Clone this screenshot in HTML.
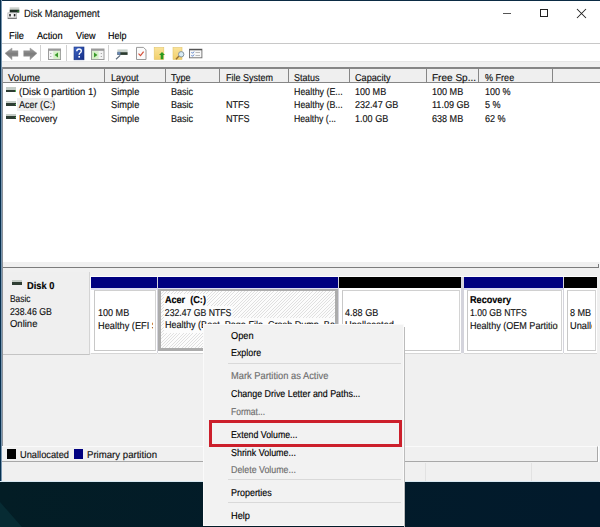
<!DOCTYPE html>
<html><head><meta charset="utf-8"><style>
html,body{margin:0;padding:0;width:600px;height:527px;overflow:hidden;}
body{position:relative;font-family:"Liberation Sans",sans-serif;}
div,span,svg{position:absolute;}
span{white-space:nowrap;line-height:1;text-rendering:geometricPrecision;transform-origin:0 0;-webkit-text-stroke:0.15px currentColor;}
</style></head><body>
<div style="left:0px;top:0px;width:600px;height:527px;background:linear-gradient(90deg,#031d25,#021b2a 60%,#021a2c)"></div>
<svg style="left:0;top:482px" width="600" height="45"><polygon points="0,20 22,45 0,45" fill="#072b33"/></svg>
<div style="left:0px;top:0px;width:600px;height:482px;background:#fff"></div>
<div style="left:0px;top:0px;width:600px;height:1px;background:#0b2b44"></div>
<div style="left:0px;top:0px;width:1px;height:482px;background:#07304f"></div>
<div style="left:1px;top:0px;width:1px;height:482px;background:#7896b0"></div>
<div style="left:0px;top:481px;width:600px;height:1px;background:#d8e8f2"></div>
<svg style="left:6px;top:6px" width="16" height="14" viewBox="0 0 16 14">
<rect x="3.7" y="1.3" width="9.6" height="2.5" fill="#cdd2cd"/>
<rect x="3.7" y="3.7" width="9.6" height="2.9" fill="#1f2f25"/>
<rect x="11.6" y="4.6" width="1.2" height="1.2" fill="#4a4"/>
<rect x="1.9" y="6.9" width="8.7" height="5.8" fill="#f6f6f6" stroke="#a8a8a8" stroke-width="0.7"/>
<rect x="3.2" y="8" width="1.6" height="2.4" fill="#222"/>
<rect x="7.8" y="8" width="1.6" height="2.4" fill="#222"/>
<rect x="1.9" y="11.7" width="8.7" height="1.1" fill="#666"/>
</svg>
<span style="left:24px;top:9.25px;font-size:10.5px;color:#111;transform:scaleX(0.8946);">Disk Management</span>
<div style="left:503px;top:13px;width:8px;height:1px;background:#555"></div>
<div style="left:540px;top:9px;width:8px;height:8px;border:1px solid #222;box-sizing:border-box"></div>
<svg style="left:576px;top:8px" width="11" height="11" viewBox="0 0 11 11"><path d="M1 1L10 10M10 1L1 10" stroke="#222" stroke-width="1.05"/></svg>
<span style="left:9px;top:31.60px;font-size:10px;color:#000;transform:scaleX(0.9309);">File</span>
<span style="left:37px;top:31.60px;font-size:10px;color:#000;transform:scaleX(0.9175);">Action</span>
<span style="left:76px;top:31.60px;font-size:10px;color:#000;transform:scaleX(0.9072);">View</span>
<span style="left:108px;top:31.60px;font-size:10px;color:#000;transform:scaleX(0.8995);">Help</span>
<div style="left:2px;top:43px;width:598px;height:1px;background:#c8c8c8"></div>
<div style="left:2px;top:61px;width:598px;height:6px;background:#f0f0f0"></div>
<div style="left:2px;top:61px;width:598px;height:1px;background:#e6e6e6"></div>
<div style="left:40px;top:45px;width:1px;height:16px;background:#d0d0d0"></div>
<div style="left:65.5px;top:45px;width:1px;height:16px;background:#d0d0d0"></div>
<div style="left:108px;top:45px;width:1px;height:16px;background:#d0d0d0"></div>
<svg style="left:4px;top:47px" width="36" height="14" viewBox="0 0 36 14">
<defs><linearGradient id="ag" x1="0" y1="0" x2="0" y2="1"><stop offset="0" stop-color="#a4a4a4"/><stop offset="0.5" stop-color="#7c7c7c"/><stop offset="1" stop-color="#969696"/></linearGradient></defs>
<path d="M1 6.3L8 1V3.7H14V9.3H8V12.7Z" fill="url(#ag)" stroke="#9a9a9a" stroke-width="0.5"/>
<path d="M33 6.3L26 1V3.7H19.7V9.3H26V12.7Z" fill="url(#ag)" stroke="#9a9a9a" stroke-width="0.5"/>
</svg>
<svg style="left:47px;top:46px" width="60" height="15" viewBox="0 0 60 15">
<rect x="1.5" y="3" width="12" height="10.5" fill="#f4f4f4" stroke="#9c9c9c" stroke-width="1"/>
<rect x="1.5" y="3" width="12" height="1.8" fill="#9a9a9a"/>
<rect x="6.3" y="5.2" width="6.8" height="7.9" fill="#d6efc8"/>
<path d="M7.6 9.1L11 6.6V11.6Z" fill="#3a9a2a"/>
<rect x="3.3" y="7" width="1" height="1" fill="#999"/><rect x="3.3" y="10" width="1" height="1" fill="#999"/>
<defs><linearGradient id="hg" x1="0" y1="0" x2="1" y2="1"><stop offset="0" stop-color="#3f68c8"/><stop offset="1" stop-color="#142c84"/></linearGradient></defs>
<rect x="27" y="1" width="10" height="12.8" fill="url(#hg)" stroke="#1c3580" stroke-width="0.6"/>
<path d="M29.8 5.2Q29.8 3 32 3Q34.3 3 34.3 5.1Q34.3 6.3 33 7Q32.2 7.5 32.2 8.8" fill="none" stroke="#fff" stroke-width="1.4"/>
<rect x="31.4" y="10" width="1.6" height="1.6" fill="#fff"/>
<rect x="44.5" y="3" width="12.5" height="10.5" fill="#f4f4f4" stroke="#9c9c9c" stroke-width="1"/>
<rect x="44.5" y="3" width="12.5" height="1.8" fill="#9a9a9a"/>
<rect x="45" y="5.2" width="6.6" height="7.9" fill="#d6efc8"/>
<path d="M47 6.6L50.4 9.1L47 11.6Z" fill="#3a9a2a"/>
<rect x="53.8" y="7" width="1" height="1" fill="#999"/><rect x="53.8" y="10" width="1" height="1" fill="#999"/>
</svg>
<svg style="left:114px;top:46px" width="92" height="15" viewBox="0 0 92 15">
<rect x="3.4" y="3.4" width="10.2" height="2.8" fill="#c9d2cc"/>
<rect x="3.4" y="6.2" width="10.2" height="2.7" fill="#2b3b2f"/>
<rect x="3.4" y="5.8" width="3" height="3" fill="#6a86b0"/>
<path d="M2 13.2L6.2 9.4" stroke="#5c6a7a" stroke-width="1.2"/>
<path d="M22.5 1.4H29.5L32 3.9V13.5H22.5Z" fill="#fbfbfb" stroke="#8e8e8e" stroke-width="0.9"/>
<path d="M24.5 7.6L26.5 9.6L29.6 5.6" fill="none" stroke="#d4503a" stroke-width="1.2"/>
<defs><linearGradient id="yg" x1="0" y1="0" x2="0" y2="1"><stop offset="0" stop-color="#fae39a"/><stop offset="1" stop-color="#f2cf6a"/></linearGradient></defs>
<rect x="40.2" y="1.5" width="9.6" height="12" fill="url(#yg)" stroke="#e2c56a" stroke-width="0.6"/>
<path d="M48 6L51 9H49.3V13.2H46.7V9H45Z" fill="#2a9a20"/>
<rect x="59" y="1.5" width="9" height="12" fill="url(#yg)" stroke="#e2c56a" stroke-width="0.6"/>
<path d="M62 13.2L65 10" stroke="#9a7030" stroke-width="1.3"/>
<circle cx="67.2" cy="8.3" r="2.7" fill="#d8ecf6" stroke="#7a8a95" stroke-width="0.9"/>
<rect x="75.5" y="3.2" width="12.4" height="8.6" fill="#f8f8f8" stroke="#6c6c6c" stroke-width="0.9"/>
<rect x="75.5" y="3" width="12.4" height="1.3" fill="#555"/>
<path d="M77.5 6.3L78.5 7.3L80 5.6M77.5 9.3L78.5 10.3L80 8.6" fill="none" stroke="#3a6ac0" stroke-width="0.9"/>
<path d="M81.5 6.5H86M81.5 9.5H86" stroke="#aaa" stroke-width="0.8"/>
</svg>
<div style="left:2px;top:67px;width:598px;height:195px;background:#fff"></div>
<div style="left:2px;top:67px;width:598px;height:1.5px;background:#868686"></div>
<div style="left:2px;top:68.5px;width:598px;height:14px;background:#efefef"></div>
<div style="left:2px;top:82.3px;width:598px;height:1.2px;background:#868686"></div>
<div style="left:104px;top:68px;width:1.2px;height:14.5px;background:#868686"></div>
<div style="left:165px;top:68px;width:1.2px;height:14.5px;background:#868686"></div>
<div style="left:219px;top:68px;width:1.2px;height:14.5px;background:#868686"></div>
<div style="left:288px;top:68px;width:1.2px;height:14.5px;background:#868686"></div>
<div style="left:349px;top:68px;width:1.2px;height:14.5px;background:#868686"></div>
<div style="left:426px;top:68px;width:1.2px;height:14.5px;background:#868686"></div>
<div style="left:478px;top:68px;width:1.2px;height:14.5px;background:#868686"></div>
<div style="left:552px;top:68px;width:1.2px;height:14.5px;background:#868686"></div>
<span style="left:7.6px;top:74.00px;font-size:10px;color:#111;transform:scaleX(0.9594);">Volume</span>
<span style="left:110.7px;top:74.00px;font-size:10px;color:#111;transform:scaleX(0.9192);">Layout</span>
<span style="left:171px;top:74.00px;font-size:10px;color:#111;transform:scaleX(0.9050);">Type</span>
<span style="left:225.7px;top:74.00px;font-size:10px;color:#111;transform:scaleX(0.8998);">File System</span>
<span style="left:294px;top:74.00px;font-size:10px;color:#111;transform:scaleX(0.8960);">Status</span>
<span style="left:355.4px;top:74.00px;font-size:10px;color:#111;transform:scaleX(0.9150);">Capacity</span>
<span style="left:432px;top:74.00px;font-size:10px;color:#111;transform:scaleX(1.0021);">Free Sp...</span>
<span style="left:484.5px;top:74.00px;font-size:10px;color:#111;transform:scaleX(0.9050);">% Free</span>
<div style="left:17px;top:98px;width:38px;height:13px;background:#ededed"></div>
<span style="left:18.5px;top:87.90px;font-size:10px;color:#111;transform:scaleX(0.9552);">(Disk 0 partition 1)</span>
<span style="left:110.7px;top:87.90px;font-size:10px;color:#111;transform:scaleX(0.9258);">Simple</span>
<span style="left:171px;top:87.90px;font-size:10px;color:#111;transform:scaleX(0.9050);">Basic</span>
<span style="left:294px;top:87.90px;font-size:10px;color:#111;transform:scaleX(0.8851);">Healthy (E...</span>
<span style="left:355.4px;top:87.90px;font-size:10px;color:#111;transform:scaleX(0.9050);">100 MB</span>
<span style="left:432px;top:87.90px;font-size:10px;color:#111;transform:scaleX(0.9050);">100 MB</span>
<span style="left:484.5px;top:87.90px;font-size:10px;color:#111;transform:scaleX(0.9050);">100 %</span>
<div style="left:6px;top:87.2px;width:10px;height:2.5px;background:#c4ccc6"></div>
<div style="left:6px;top:89.7px;width:10px;height:2.6px;background:#2e3d33"></div>
<div style="left:14.5px;top:90.2px;width:1.2px;height:1.4px;background:#5a5"></div>
<span style="left:18.5px;top:101.30px;font-size:10px;color:#111;transform:scaleX(0.9050);">Acer (C:)</span>
<span style="left:110.7px;top:101.30px;font-size:10px;color:#111;transform:scaleX(0.9258);">Simple</span>
<span style="left:171px;top:101.30px;font-size:10px;color:#111;transform:scaleX(0.9050);">Basic</span>
<span style="left:225.7px;top:101.30px;font-size:10px;color:#111;transform:scaleX(0.9050);">NTFS</span>
<span style="left:294px;top:101.30px;font-size:10px;color:#111;transform:scaleX(0.8851);">Healthy (B...</span>
<span style="left:355.4px;top:101.30px;font-size:10px;color:#111;transform:scaleX(0.9050);">232.47 GB</span>
<span style="left:432px;top:101.30px;font-size:10px;color:#111;transform:scaleX(0.9050);">11.09 GB</span>
<span style="left:484.5px;top:101.30px;font-size:10px;color:#111;transform:scaleX(0.9050);">5 %</span>
<div style="left:6px;top:100.6px;width:10px;height:2.5px;background:#c4ccc6"></div>
<div style="left:6px;top:103.1px;width:10px;height:2.6px;background:#2e3d33"></div>
<div style="left:14.5px;top:103.6px;width:1.2px;height:1.4px;background:#5a5"></div>
<span style="left:18.5px;top:114.60px;font-size:10px;color:#111;transform:scaleX(0.9050);">Recovery</span>
<span style="left:110.7px;top:114.60px;font-size:10px;color:#111;transform:scaleX(0.9258);">Simple</span>
<span style="left:171px;top:114.60px;font-size:10px;color:#111;transform:scaleX(0.9050);">Basic</span>
<span style="left:225.7px;top:114.60px;font-size:10px;color:#111;transform:scaleX(0.9050);">NTFS</span>
<span style="left:294px;top:114.60px;font-size:10px;color:#111;transform:scaleX(0.8687);">Healthy (...</span>
<span style="left:355.4px;top:114.60px;font-size:10px;color:#111;transform:scaleX(0.9050);">1.00 GB</span>
<span style="left:432px;top:114.60px;font-size:10px;color:#111;transform:scaleX(0.9050);">638 MB</span>
<span style="left:484.5px;top:114.60px;font-size:10px;color:#111;transform:scaleX(0.9050);">62 %</span>
<div style="left:6px;top:113.89999999999999px;width:10px;height:2.5px;background:#c4ccc6"></div>
<div style="left:6px;top:116.39999999999999px;width:10px;height:2.6px;background:#2e3d33"></div>
<div style="left:14.5px;top:116.89999999999999px;width:1.2px;height:1.4px;background:#5a5"></div>
<div style="left:2px;top:262px;width:598px;height:5px;background:#f0f0f0"></div>
<div style="left:2px;top:267px;width:597px;height:1px;background:#7c7c7c"></div>
<div style="left:598px;top:263.5px;width:1px;height:4.5px;background:#7c7c7c"></div>
<div style="left:599px;top:262px;width:1px;height:220px;background:#f4f6f8"></div>
<div style="left:2px;top:268px;width:598px;height:178px;background:#f0f0f0"></div>
<div style="left:2px;top:67px;width:1px;height:394px;background:#8c9198"></div>
<div style="left:3px;top:272px;width:87px;height:83px;background:#efefef;border-right:1px solid #d4d4d4;border-bottom:1px solid #c4c4c4;box-sizing:border-box"></div>
<div style="left:12px;top:280px;width:10px;height:2.2px;background:#c4ccc6"></div>
<div style="left:12px;top:282.2px;width:10px;height:2.6px;background:#2e3d33"></div>
<span style="left:27px;top:282.00px;font-size:10px;color:#000;transform:scaleX(0.9266);font-weight:bold;">Disk 0</span>
<span style="left:10px;top:294.80px;font-size:10px;color:#111;transform:scaleX(0.8383);">Basic</span>
<span style="left:10px;top:307.80px;font-size:10px;color:#111;transform:scaleX(0.8742);">238.46 GB</span>
<span style="left:10px;top:320.00px;font-size:10px;color:#111;transform:scaleX(0.9479);">Online</span>
<div style="left:90px;top:275.8px;width:507px;height:1.2px;background:#fdfdfd"></div>
<div style="left:156px;top:277px;width:441px;height:76px;background:#d4d4dc"></div>
<div style="left:89.5px;top:276px;width:1.5px;height:77px;background:#fbfbfd"></div>
<div style="left:90.5px;top:277px;width:66.5px;height:11px;background:#000080"></div>
<div style="left:90.5px;top:288px;width:66.5px;height:65px;background:#fff"></div>
<div style="left:90.5px;top:353px;width:66.5px;height:1px;background:#d6d6d6"></div>
<div style="left:90.5px;top:288px;width:66.5px;height:1.5px;background:#dcdcf0"></div>
<div style="left:93.5px;top:290px;width:62.5px;height:60.5px;background:#fff;border-left:1px solid #c8c8c8;border-top:1px solid #d0d0d0;border-right:1px solid #d4d4d4;border-bottom:1px solid #c8c8c8;box-sizing:border-box"></div>
<div style="left:94.5px;top:291px;width:58.5px;height:57px;overflow:hidden">
<span style="left:3.0px;top:18.00px;font-size:10px;color:#111;transform:scaleX(0.9053);">100 MB</span>
<span style="left:3.0px;top:30.90px;font-size:10px;color:#111;transform:scaleX(0.9220);">Healthy (EFI System Partition)</span>
</div>
<div style="left:158px;top:277px;width:180px;height:11px;background:#000080"></div>
<div style="left:158px;top:288px;width:180px;height:65px;background:#fff"></div>
<div style="left:158px;top:353px;width:180px;height:1px;background:#d6d6d6"></div>
<div style="left:158px;top:288px;width:180px;height:1.5px;background:#dcdcf0"></div>
<div style="left:158px;top:289px;width:180px;height:62px;background:#acacac"></div>
<div style="left:161px;top:291px;width:174px;height:57px;background:repeating-linear-gradient(135deg,#fcfcfc 0 1.6px,#e0e0e0 1.6px 2.3px)"></div>
<div style="left:161px;top:291px;width:174px;height:57px;overflow:hidden">
<span style="left:3.5px;top:5.30px;font-size:10px;color:#000;transform:scaleX(0.9110);font-weight:bold;background:#fcfcfc;padding:2.6px 1px 1.8px 1px;margin:-2.6px 0 0 -1px;">Acer&nbsp; (C:)</span>
<span style="left:3.5px;top:17.70px;font-size:10px;color:#111;transform:scaleX(0.8670);background:#fcfcfc;padding:2.6px 1px 1.8px 1px;margin:-2.6px 0 0 -1px;">232.47 GB NTFS</span>
<span style="left:3.5px;top:30.00px;font-size:10px;color:#111;transform:scaleX(0.9050);background:#fcfcfc;padding:2.6px 1px 1.8px 1px;margin:-2.6px 0 0 -1px;">Healthy (Boot, Page File, Crash Dump, Basic Data Partition)</span>
</div>
<div style="left:339px;top:277px;width:122px;height:11px;background:#000"></div>
<div style="left:339px;top:288px;width:122px;height:65px;background:#fff"></div>
<div style="left:339px;top:353px;width:122px;height:1px;background:#d6d6d6"></div>
<div style="left:339px;top:288px;width:122px;height:1.5px;#e8e8e8"></div>
<div style="left:342px;top:290px;width:118px;height:60.5px;background:#fff;border-left:1px solid #c8c8c8;border-top:1px solid #d0d0d0;border-right:1px solid #d4d4d4;border-bottom:1px solid #c8c8c8;box-sizing:border-box"></div>
<div style="left:343px;top:291px;width:113px;height:57px;overflow:hidden">
<span style="left:2px;top:17.50px;font-size:10px;color:#111;transform:scaleX(0.9050);">4.88 GB</span>
<span style="left:2px;top:30.00px;font-size:10px;color:#111;transform:scaleX(0.9278);">Unallocated</span>
</div>
<div style="left:464px;top:277px;width:99px;height:11px;background:#000080"></div>
<div style="left:464px;top:288px;width:99px;height:65px;background:#fff"></div>
<div style="left:464px;top:353px;width:99px;height:1px;background:#d6d6d6"></div>
<div style="left:464px;top:288px;width:99px;height:1.5px;background:#dcdcf0"></div>
<div style="left:467px;top:290px;width:95px;height:60.5px;background:#fff;border-left:1px solid #c8c8c8;border-top:1px solid #d0d0d0;border-right:1px solid #d4d4d4;border-bottom:1px solid #c8c8c8;box-sizing:border-box"></div>
<div style="left:468px;top:291px;width:90px;height:57px;overflow:hidden">
<span style="left:2px;top:4.60px;font-size:10px;color:#000;transform:scaleX(0.9105);font-weight:bold;">Recovery</span>
<span style="left:2px;top:17.90px;font-size:10px;color:#111;transform:scaleX(0.8662);">1.00 GB NTFS</span>
<span style="left:2px;top:31.00px;font-size:10px;color:#111;transform:scaleX(0.9050);">Healthy (OEM Partition)</span>
</div>
<div style="left:564px;top:277px;width:32.5px;height:11px;background:#000"></div>
<div style="left:564px;top:288px;width:32.5px;height:65px;background:#fff"></div>
<div style="left:564px;top:353px;width:32.5px;height:1px;background:#d6d6d6"></div>
<div style="left:564px;top:288px;width:32.5px;height:1.5px;#e8e8e8"></div>
<div style="left:567px;top:290px;width:28.5px;height:60.5px;background:#fff;border-left:1px solid #c8c8c8;border-top:1px solid #d0d0d0;border-right:1px solid #d4d4d4;border-bottom:1px solid #c8c8c8;box-sizing:border-box"></div>
<div style="left:568px;top:291px;width:23.5px;height:57px;overflow:hidden">
<span style="left:2px;top:17.90px;font-size:10px;color:#111;transform:scaleX(0.9050);">8 MB</span>
<span style="left:2px;top:31.00px;font-size:10px;color:#111;transform:scaleX(0.9278);">Unallocated</span>
</div>
<div style="left:2px;top:446px;width:596px;height:16px;background:#f0f0f0;border-top:1px solid #fafafa;border-bottom:1px solid #a8a8a8;border-right:1px solid #a8a8a8;box-sizing:border-box"></div>
<div style="left:7px;top:449px;width:8.5px;height:9.5px;background:#000"></div>
<span style="left:19.5px;top:451.00px;font-size:10px;color:#111;transform:scaleX(0.9278);">Unallocated</span>
<div style="left:74px;top:449px;width:8.5px;height:9.5px;background:#000080"></div>
<span style="left:86.8px;top:451.00px;font-size:10px;color:#111;transform:scaleX(0.9616);">Primary partition</span>
<div style="left:2px;top:462px;width:598px;height:19px;background:#f0f0f0"></div>
<div style="left:425px;top:463px;width:1px;height:18px;background:#e2e2e2"></div>
<div style="left:531px;top:463px;width:1px;height:18px;background:#e2e2e2"></div>
<div style="left:403.5px;top:326.5px;width:1.8px;height:200px;background:#bcbcbc"></div>
<div style="left:203px;top:324px;width:201px;height:202px;background:#f2f2f2;border:1px solid #fafafa;box-sizing:border-box"></div>
<span style="left:230.7px;top:332.00px;font-size:10px;color:#000;transform:scaleX(0.9198);">Open</span>
<span style="left:230.7px;top:349.40px;font-size:10px;color:#000;transform:scaleX(0.8877);">Explore</span>
<span style="left:230.7px;top:372.20px;font-size:10px;color:#6d6d6d;transform:scaleX(0.9313);">Mark Partition as Active</span>
<span style="left:230.7px;top:389.80px;font-size:10px;color:#000;transform:scaleX(0.8878);">Change Drive Letter and Paths...</span>
<span style="left:230.7px;top:407.90px;font-size:10px;color:#6d6d6d;transform:scaleX(0.8499);">Format...</span>
<span style="left:230.7px;top:430.70px;font-size:10px;color:#000;transform:scaleX(0.8783);">Extend Volume...</span>
<span style="left:230.7px;top:448.50px;font-size:10px;color:#000;transform:scaleX(0.8913);">Shrink Volume...</span>
<span style="left:230.7px;top:466.30px;font-size:10px;color:#6d6d6d;transform:scaleX(0.8845);">Delete Volume...</span>
<span style="left:230.7px;top:489.20px;font-size:10px;color:#000;transform:scaleX(0.8952);">Properties</span>
<span style="left:230.7px;top:511.90px;font-size:10px;color:#000;transform:scaleX(0.9238);">Help</span>
<div style="left:228px;top:363px;width:173px;height:1px;background:#d9d9d9"></div>
<div style="left:228px;top:479px;width:173px;height:1px;background:#d9d9d9"></div>
<div style="left:228px;top:502px;width:173px;height:1px;background:#d9d9d9"></div>
<div style="left:209px;top:420px;width:193px;height:27px;border:3px solid #cc1f2b;box-sizing:border-box"></div>
</body></html>
